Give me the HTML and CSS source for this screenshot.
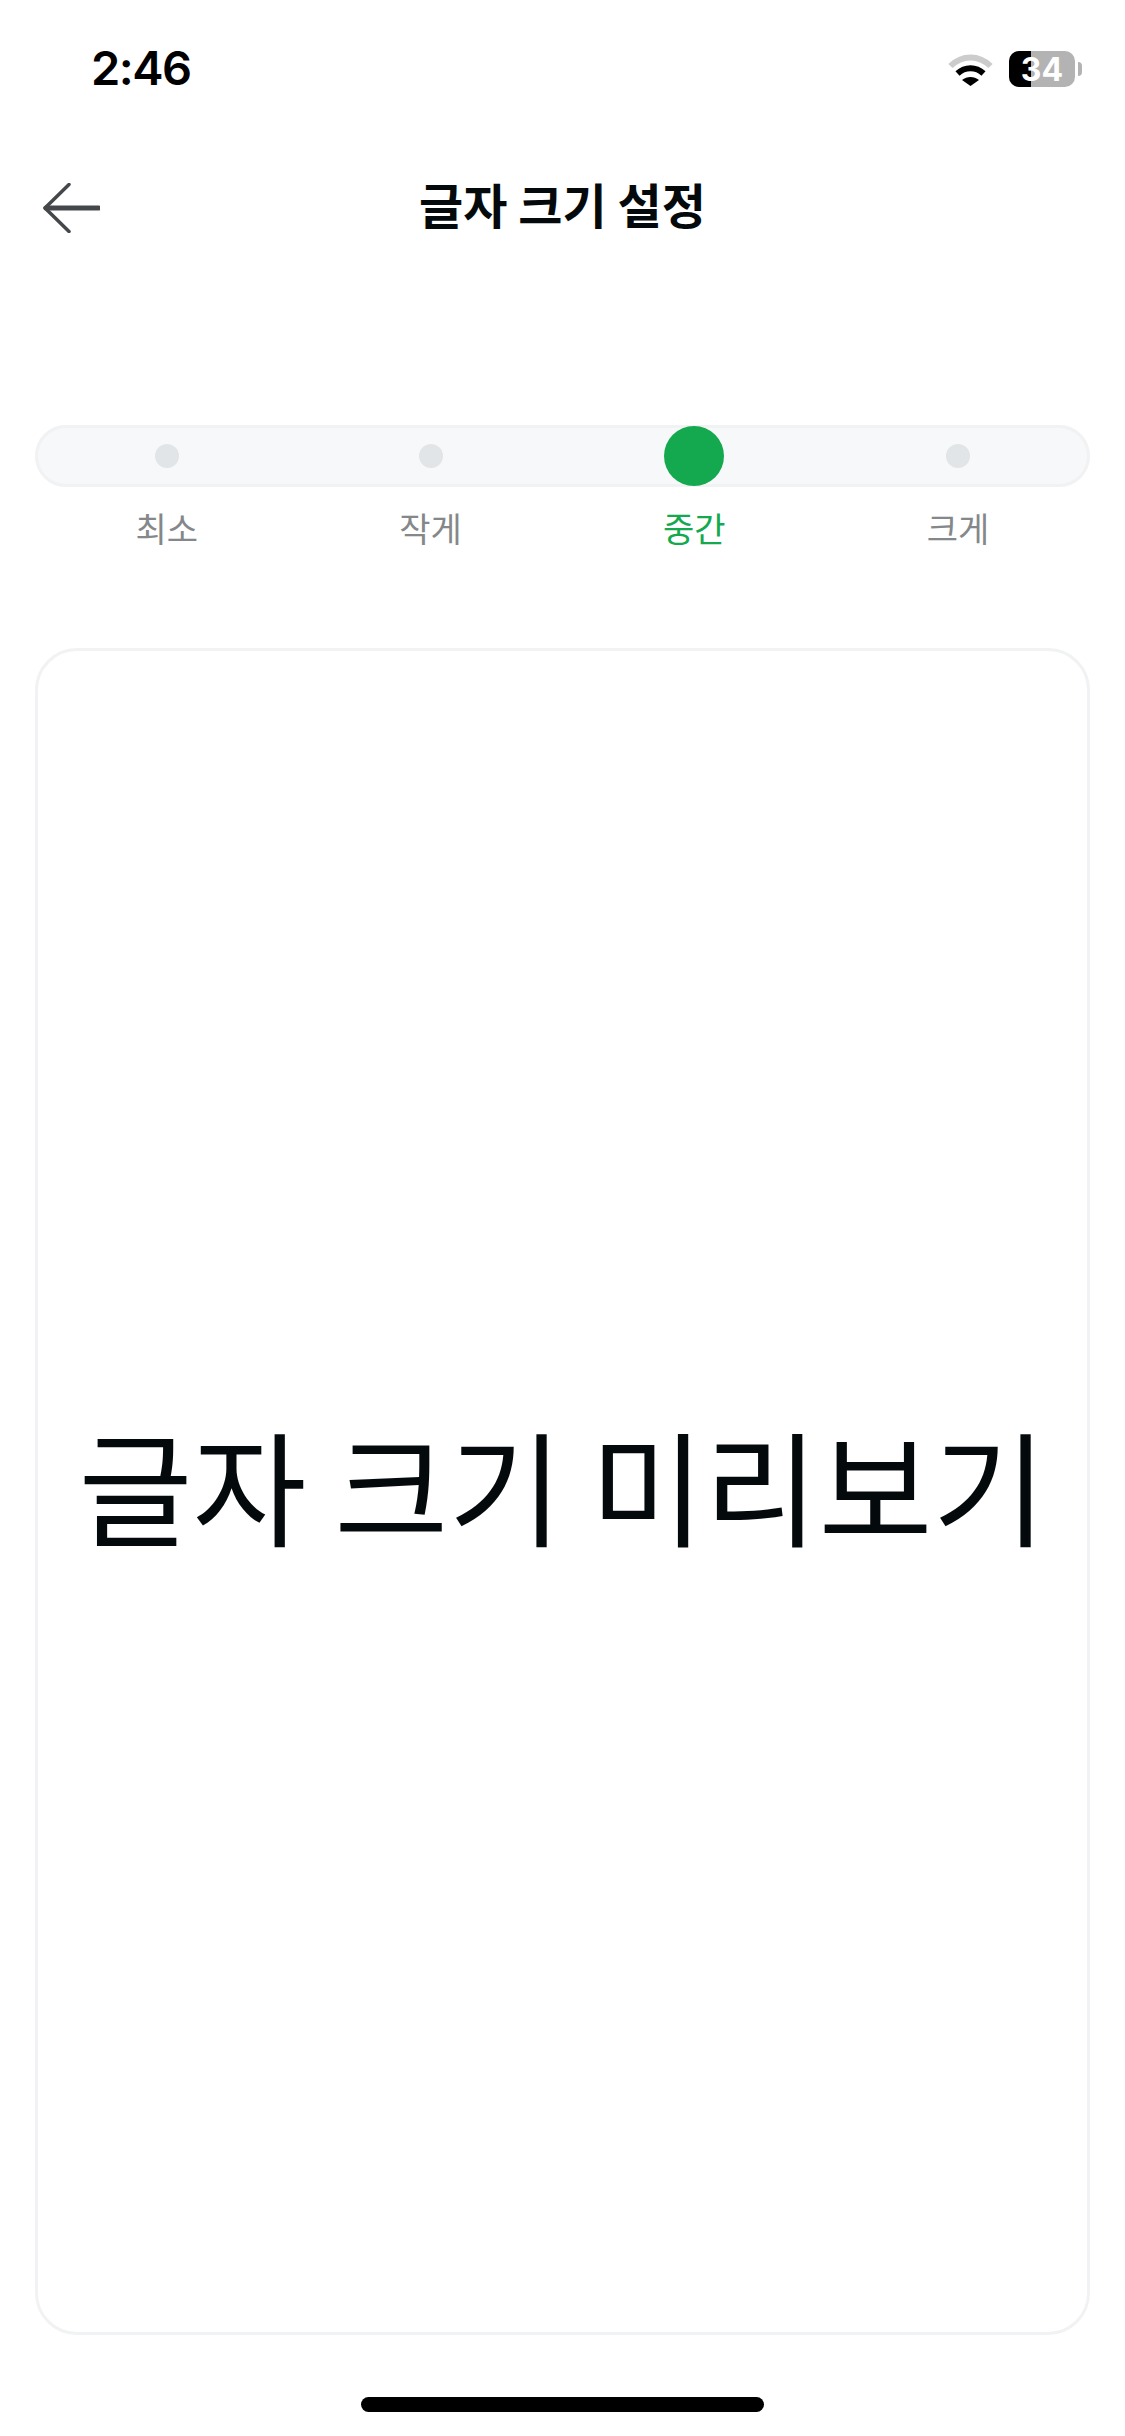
FILE: index.html
```html
<html><head><meta charset="UTF-8">
<meta name="viewport" content="width=device-width, initial-scale=1.0">
<title>글자 크기 설정</title>
<link rel="stylesheet" href="styles.css">
</head>
<body>
    <div class="screen">
        <div class="status-bar">
            <span class="time">2:46</span>
            <div class="status-icons">
                <svg class="wifi" width="45" height="33" viewBox="0 0 45 33" fill="none" xmlns="http://www.w3.org/2000/svg">
                    <path d="M2.500 13C14 1.500 31 1.500 42.500 13" stroke="#cccccc" stroke-width="6"/>
                    <path d="M9.500 20.500C17 13.500 28 13.500 35.500 20.500" stroke="#000000" stroke-width="6"/>
                    <path d="M14 27C19 23 26 23 31 27L22.500 33Z" fill="#000000"/>
                </svg>
                <div class="battery">
                    <div class="battery-body">
                        <div class="battery-level"></div>
                        <span class="battery-text">34</span>
                    </div>
                    <div class="battery-tip"></div>
                </div>
            </div>
        </div>

        <div class="header">
            <button class="back-button">
                <svg width="57" height="50" viewBox="0 0 57 50" fill="none" xmlns="http://www.w3.org/2000/svg">
                    <path d="M26 1.500L2 25L26 48.500" stroke="#45484a" stroke-width="3.500" stroke-linecap="round" stroke-linejoin="round"/>
                    <path d="M3 25H55.500" stroke="#45484a" stroke-width="5" stroke-linecap="round"/>
                </svg>
            </button>
            <h1 class="title">글자 크기 설정</h1>
        </div>

        <div class="size-track">
            <div class="stop"><span class="dot"></span></div>
            <div class="stop"><span class="dot"></span></div>
            <div class="stop"><span class="dot dot-active"></span></div>
            <div class="stop"><span class="dot"></span></div>
        </div>
        <div class="size-labels">
            <span class="size-label">최소</span>
            <span class="size-label">작게</span>
            <span class="size-label size-label-active">중간</span>
            <span class="size-label">크게</span>
        </div>

        <div class="preview-card">
            <p class="preview-text">글자 크기 미리보기</p>
        </div>

        <div class="home-area">
            <div class="home-bar"></div>
        </div>
    </div>
</body>
</html>
```

FILE: styles.css
```css
:root {
    --green: #14a94f;
    --text-color: #04090c;
    --muted-color: #85888a;
    --line-color: #f1f2f3;
    --track-color: #f6f8f9;
    --dot-color: #e2e5e7;
}

body {
    margin: 0;
    padding: 0;
    background-color: #ffffff;
    font-family: "Noto Sans CJK KR", "Noto Sans", sans-serif;
}

.screen {
    width: 1125px;
    height: 2436px;
    padding: 0 35px;
    box-sizing: border-box;
    display: flex;
    flex-direction: column;
    overflow: hidden;
}

.status-bar {
    height: 138px;
    padding: 0 8px 0 56px;
    display: flex;
    justify-content: space-between;
    align-items: center;
}

.time {
    margin-top: -3px;
    font-family: "Inter", sans-serif;
    font-size: 47px;
    font-weight: 600;
    letter-spacing: -1.500px;
    color: #000000;
}

.status-icons {
    display: flex;
    align-items: center;
    gap: 16px;
}

.wifi {
    display: block;
}

.battery {
    display: flex;
    align-items: center;
    gap: 3px;
}

.battery-body {
    position: relative;
    width: 66px;
    height: 36px;
    border-radius: 10px;
    background-color: #b3b3b3;
    overflow: hidden;
    display: flex;
    justify-content: center;
    align-items: center;
}

.battery-level {
    position: absolute;
    left: 0;
    top: 0;
    bottom: 0;
    width: 22px;
    background-color: #000000;
}

.battery-text {
    position: relative;
    font-family: "Inter", sans-serif;
    font-size: 32px;
    font-weight: 700;
    color: #ffffff;
}

.battery-tip {
    width: 4px;
    height: 14px;
    border-radius: 0 4px 4px 0;
    background-color: #b3b3b3;
}

.header {
    position: relative;
    height: 138px;
    display: flex;
    justify-content: center;
    align-items: center;
}

.back-button {
    position: absolute;
    left: 8px;
    top: 45px;
    padding: 0;
    border: none;
    background: none;
    display: flex;
}

.title {
    margin: -8px 0 0;
    font-size: 48px;
    font-weight: 700;
    color: var(--text-color);
}

.size-track {
    margin-top: 149px;
    height: 62px;
    border-radius: 31px;
    background-color: var(--track-color);
    box-shadow: inset 0 0 0 3px var(--line-color);
    display: grid;
    grid-template-columns: repeat(4, 1fr);
}

.stop {
    display: flex;
    justify-content: center;
    align-items: center;
}

.dot {
    flex-shrink: 0;
    width: 24px;
    height: 24px;
    border-radius: 50%;
    background-color: var(--dot-color);
}

.dot-active {
    width: 60px;
    height: 60px;
    background-color: var(--green);
}

.size-labels {
    margin-top: 16px;
    display: grid;
    grid-template-columns: repeat(4, 1fr);
}

.size-label {
    text-align: center;
    font-size: 34px;
    line-height: 50px;
    color: var(--muted-color);
}

.size-label-active {
    color: var(--green);
}

.preview-card {
    margin-top: 95px;
    height: 1687px;
    padding-bottom: 17px;
    box-sizing: border-box;
    border: 3px solid var(--line-color);
    border-radius: 42px;
    display: flex;
    justify-content: center;
    align-items: center;
}

.preview-text {
    margin: 0;
    font-size: 124px;
    line-height: 1.2;
    white-space: nowrap;
    color: var(--text-color);
}

.home-area {
    flex: 1;
    display: flex;
    justify-content: center;
    padding-top: 62px;
}

.home-bar {
    width: 403px;
    height: 15px;
    border-radius: 8px;
    background-color: #000000;
}
```
